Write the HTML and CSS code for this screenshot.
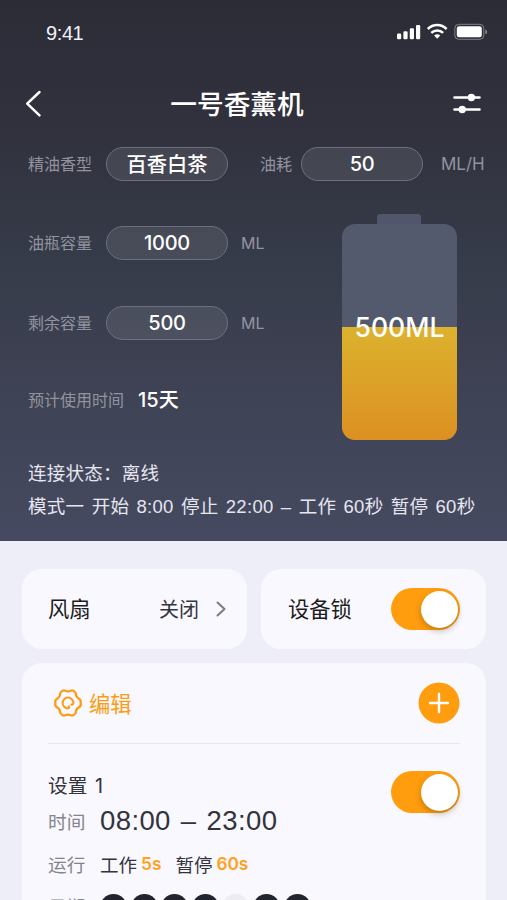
FILE: index.html
```html
<!DOCTYPE html>
<html lang="zh-CN">
<head>
<meta charset="utf-8">
<title>一号香薰机</title>
<link rel="stylesheet" href="styles.css">
</head>
<body>
<div class="screen">
  <section class="hero">
    <div class="status-bar">
      <span class="clock">9:41</span>
      <svg class="status-icons" width="92" height="18" viewBox="0 0 92 18">
        <g fill="#fff">
          <rect x="1" y="10.6" width="4.2" height="5.6" rx="1.2"/>
          <rect x="7.4" y="8.3" width="4.2" height="7.9" rx="1.2"/>
          <rect x="13.8" y="5.2" width="4.2" height="11" rx="1.2"/>
          <rect x="20" y="2" width="4.2" height="14.2" rx="1.2"/>
        </g>
        <g fill="none" stroke="#fff" stroke-width="2.5">
          <path d="M31.8 6a13.3 13.3 0 0 1 18.8 0"/>
          <path d="M35.3 9.8a8.4 8.4 0 0 1 11.8 0"/>
        </g>
        <path d="M38.1 12.6a4.6 4.6 0 0 1 6.2 0L41.2 15.8z" fill="#fff"/>
        <rect x="58.8" y="1.3" width="29" height="15" rx="4" fill="none" stroke="#fff" stroke-opacity=".4"/>
        <rect x="60.8" y="3.3" width="25" height="11" rx="2.2" fill="#fff"/>
        <path d="M89.4 6.5q1.8.8 1.8 2.4t-1.8 2.4z" fill="#fff" opacity=".45"/>
      </svg>
    </div>

    <header class="nav">
      <svg width="18" height="28" viewBox="0 0 18 28" fill="none" stroke="#fff" stroke-width="2.5" stroke-linecap="round" stroke-linejoin="round"><path d="M15.5 2 3.2 13.7l12.3 11.6"/></svg>
      <h1>一号香薰机</h1>
      <svg width="28" height="22" viewBox="0 0 28 22"><g stroke="#fff" stroke-width="2.6" stroke-linecap="round"><path d="M1.5 4.5h25M1.5 16.5h25"/></g><circle cx="18.4" cy="4.5" r="3.7" fill="#fff"/><circle cx="9.2" cy="16.5" r="3.7" fill="#fff"/></svg>
    </header>

    <div class="field first">
      <label>精油香型</label><span class="pill cjk">百香白茶</span>
      <label class="usage">油耗</label><span class="pill">50</span>
      <span class="unit rate">ML/H</span>
    </div>

    <div class="overview">
      <div class="fields">
        <div class="field"><label>油瓶容量</label><span class="pill">1000</span><span class="unit">ML</span></div>
        <div class="field"><label>剩余容量</label><span class="pill">500</span><span class="unit">ML</span></div>
        <div class="estimate"><label>预计使用时间</label><b>15天</b></div>
      </div>
      <div class="bottle">
        <div class="cap"></div>
        <div class="tank"><div class="oil"></div><span class="level">500ML</span></div>
      </div>
    </div>

    <p class="info">连接状态：离线</p>
    <p class="info mode">模式一 开始 8:00 停止 22:00 – 工作 60秒 暂停 60秒</p>
  </section>

  <main>
    <div class="quick">
      <div class="card fan">
        <span class="name">风扇</span><span class="state">关闭</span>
        <svg width="12" height="18" viewBox="0 0 12 18" fill="none" stroke="#7b7b82" stroke-width="2" stroke-linecap="round" stroke-linejoin="round"><path d="M2.5 2.5 9.5 9l-7 6.5"/></svg>
      </div>
      <div class="card lock"><span class="name">设备锁</span><span class="toggle"><i></i></span></div>
    </div>

    <div class="card schedule">
      <div class="edit">
        <svg width="30" height="30" viewBox="0 0 30 30" fill="none" stroke="#fb9c14" stroke-width="2.2" stroke-linecap="round" stroke-linejoin="round"><path d="M7.3 5Q9.6 1.6 12.3 2.8Q15 4 17.7 2.8Q20.4 1.6 22.7 5Q23 8.8 25.3 10.2Q28.6 12 27.6 15Q28.6 18 25.3 19.8Q23 21.2 22.7 25Q20.4 28.4 17.7 27.2Q15 26 12.3 27.2Q9.6 28.4 7.3 25Q7 21.2 4.7 19.8Q1.4 18 2.4 15Q1.4 12 4.7 10.2Q7 8.8 7.3 5Z"/><path d="M15 20.4A5.4 5.4 0 1 1 20.4 15Q20.2 17 18.4 16.6M15 20.4Q17 20 15.8 18.3" stroke-width="2"/></svg>
        <span>编辑</span>
        <svg class="add" width="42" height="42" viewBox="0 0 42 42"><circle cx="21" cy="21" r="20.5" fill="#ff9d0e"/><path d="M21 12v18M12 21h18" stroke="#fff" stroke-width="2.4" stroke-linecap="round"/></svg>
      </div>
      <div class="plan">
        <div class="details">
          <h2>设置 1</h2>
          <div class="line time"><label>时间</label><span>08:00 – 23:00</span></div>
          <div class="line run"><label>运行</label><span>工作</span><em>5s</em><span class="pause">暂停</span><em>60s</em></div>
          <div class="line days"><label>日期</label><i></i><i></i><i></i><i></i><i class="off"></i><i></i><i></i></div>
        </div>
        <span class="toggle"><i></i></span>
      </div>
    </div>
  </main>
</div>
</body>
</html>
```
FILE: styles.css
```css
* { box-sizing: border-box; }
html, body { margin: 0; height: 900px; overflow: hidden; }
body {
  width: 507px;
  background: #eeeef9;
  font-family: Inter, "Noto Sans CJK SC", sans-serif;
}
h1, h2, p { margin: 0; font-weight: 400; }
svg { display: block; flex: none; }
span, label, b, em { white-space: nowrap; }

.screen { height: 900px; overflow: hidden; }
.hero {
  height: 541px;
  background: linear-gradient(#2b2c36, #31323e 25%, #363b49 47%, #3f4356 75%, #464a60);
  color: #f1f1f8;
}
.status-bar {
  display: flex;
  justify-content: space-between;
  height: 65px;
  padding: 23px 19px 0 46px;
}
.clock { font: 20px/20px "Liberation Sans", sans-serif; letter-spacing: -.4px; }

.nav {
  display: flex;
  align-items: center;
  justify-content: space-between;
  height: 78px;
  padding: 0 26px 0 24px;
}
.nav h1 { margin-right: 21px; font-size: 26.7px; line-height: 40px; font-weight: 500; color: #fff; }

label, .unit { color: #92939f; font-size: 16px; }
label { padding-bottom: 1px; }
.field { display: flex; align-items: center; height: 34px; }
.field label { width: 78px; }
.first { margin: 3.5px 0 0 28px; }
.pill {
  width: 122px;
  height: 34px;
  border: 1px solid #6d6f7c;
  border-radius: 17px;
  background: rgba(255, 255, 255, .09);
  color: #fff;
  font-size: 20px;
  line-height: 33px;
  font-weight: 500;
  letter-spacing: -.3px;
  text-align: center;
}
.pill.cjk { font-size: 20.3px; letter-spacing: 0; }
.field .usage { width: 41px; margin-left: 32px; }
.unit { margin-left: 13px; padding-top: 1px; }
.rate { margin-left: 18px; font-size: 17px; }

.overview { display: flex; justify-content: space-between; height: 260px; padding: 33px 50px 0 28px; }
.fields { padding-top: 12px; }
.fields .field { margin-bottom: 46px; }
.estimate { display: flex; align-items: center; height: 30px; margin-top: -1px; }
.estimate b { margin-left: 14px; padding-bottom: 2px; font-size: 20px; font-weight: 500; color: #fff; }

.bottle { width: 115px; }
.cap { width: 44px; height: 10px; margin-left: 35px; border-radius: 3px 3px 0 0; background: #51576a; }
.tank {
  display: flex;
  flex-direction: column;
  justify-content: flex-end;
  position: relative;
  height: 216px;
  border-radius: 13px;
  overflow: hidden;
  background: #535a6d;
}
.oil { height: 113px; background: linear-gradient(#dcb22e, #dc9022); }
.level {
  position: absolute;
  left: 0;
  right: 0;
  top: 87px;
  color: #fff;
  font-size: 26.6px;
  line-height: 32px;
  font-weight: 500;
  text-align: center;
}
.info { margin: 18px 0 0 28px; font-size: 18.5px; line-height: 28px; letter-spacing: .25px; color: #e6e6f0; white-space: nowrap; }
.mode { margin-top: 6px; font-family: "Liberation Sans", "Noto Sans CJK SC", sans-serif; letter-spacing: .3px; word-spacing: 1.8px; }

main { padding: 28px 21px 0 22px; }
.card { border-radius: 20px; background: #f9f8fe; }
.quick { display: flex; gap: 14px; }
.quick .card { display: flex; align-items: center; height: 80px; width: 225px; }
.fan { padding: 0 20px 0 26px; }
.lock { padding: 0 26px 0 27px; justify-content: space-between; }
.name { padding-bottom: 3px; font-size: 21.3px; color: #1b1b20; }
.state { margin: 0 16px 0 auto; padding-bottom: 2px; font-size: 20px; color: #35353e; }
.toggle {
  display: flex;
  justify-content: flex-end;
  flex: none;
  width: 69px;
  height: 42px;
  padding: 2.5px;
  border-radius: 21px;
  background: #ff9d0e;
}
.toggle i { width: 37px; height: 37px; border-radius: 50%; background: #fff; box-shadow: 0 3px 6px rgba(50, 30, 0, .28); }

.schedule { height: 300px; margin-top: 14px; padding: 0 26px; }
.edit {
  display: flex;
  align-items: center;
  height: 81px;
  padding-left: 5px;
  border-bottom: 1px solid #e8e7ef;
}
.edit span { margin-left: 6px; padding-bottom: 2px; font-size: 21.3px; color: #fb9c14; }
.add { margin-left: auto; }
.plan { display: flex; justify-content: space-between; padding-top: 27px; }
h2 { margin-top: 1px; font-size: 19.7px; line-height: 28px; word-spacing: 2px; color: #33333b; }
.line { display: flex; align-items: center; white-space: nowrap; color: #33333b; }
.line label { width: 52px; font-size: 18.7px; letter-spacing: 0; color: #85858e; }
.time { height: 42px; font: 27.5px/42px "Liberation Sans", sans-serif; letter-spacing: .4px; word-spacing: 2px; }
.time label { font-family: "Noto Sans CJK SC", sans-serif; }
.run { height: 44px; padding-bottom: 1px; font-size: 18.5px; }
.run label { padding-bottom: 0; }
.run em { margin-left: 4px; color: #ffa020; font-size: 17.3px; font-weight: 600; font-style: normal; }
.pause { margin-left: 14px; }
.days { height: 28px; margin-top: 7px; }
.days label { padding-bottom: 3px; }
.days i { width: 27px; height: 27px; margin-right: 3.6px; border-radius: 50%; background: #22242e; }
.days .off { background: #ececf2; }
```
